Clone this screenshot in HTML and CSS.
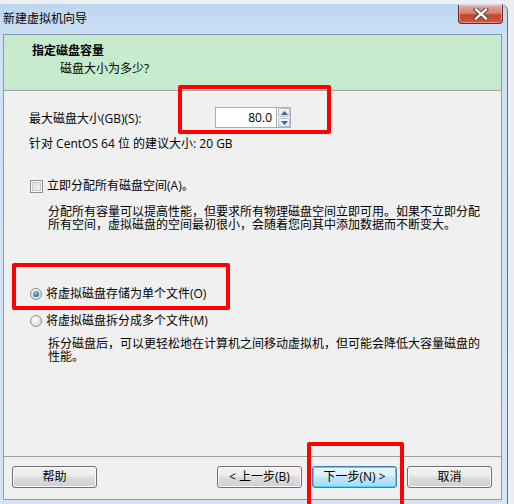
FILE: index.html
```html
<!DOCTYPE html>
<html lang="zh-CN">
<head>
<meta charset="utf-8">
<title>新建虚拟机向导</title>
<link rel="stylesheet" href="styles.css">
</head>
<body>
<div class="screen">
  <div class="window">
    <div class="titlebar">
      <span class="title">新建虚拟机向导</span>
      <div class="close">
        <svg width="16" height="12" viewBox="0 0 16 12">
          <path d="M3 1.5 L13 10.5 M13 1.5 L3 10.5" stroke="#3a3a3a" stroke-width="4.2" stroke-linecap="square"/>
          <path d="M3 1.5 L13 10.5 M13 1.5 L3 10.5" stroke="#ffffff" stroke-width="2.4" stroke-linecap="square"/>
        </svg>
      </div>
    </div>
    <div class="client">
      <div class="header">
        <div class="h-title">指定磁盘容量</div>
        <div class="h-sub">磁盘大小为多少?</div>
      </div>
      <div class="body">
        <div class="size-row">
          <span class="size-label">最大磁盘大小(GB)(S):</span>
          <div class="spin">
            <div class="spin-input">80.0</div>
            <div class="spin-btns">
              <div class="spin-btn"><svg width="7" height="4" viewBox="0 0 7 4"><path d="M0 4 L3.5 0 L7 4 Z" fill="#4d6185"/></svg></div>
              <div class="spin-btn"><svg width="7" height="4" viewBox="0 0 7 4"><path d="M0 0 L3.5 4 L7 0 Z" fill="#4d6185"/></svg></div>
            </div>
          </div>
        </div>
        <div class="hint">针对 CentOS 64 位 的建议大小: 20 GB</div>
        <div class="check-row"><span class="checkbox"></span><span>立即分配所有磁盘空间(A)。</span></div>
        <p class="desc desc1">分配所有容量可以提高性能，但要求所有物理磁盘空间立即可用。如果不立即分配所有空间，虚拟磁盘的空间最初很小，会随着您向其中添加数据而不断变大。</p>
        <div class="radio-row r1"><span class="radio on"></span><span>将虚拟磁盘存储为单个文件(O)</span></div>
        <div class="radio-row r2"><span class="radio"></span><span>将虚拟磁盘拆分成多个文件(M)</span></div>
        <p class="desc desc2">拆分磁盘后，可以更轻松地在计算机之间移动虚拟机，但可能会降低大容量磁盘的性能。</p>
      </div>
      <div class="footer">
        <button class="btn">帮助</button>
        <div class="spacer"></div>
        <button class="btn">&lt; 上一步(B)</button>
        <button class="btn primary">下一步(N) &gt;</button>
        <button class="btn">取消</button>
      </div>
    </div>
  </div>
  <div class="mark mark1"></div>
  <div class="mark mark2"></div>
  <div class="mark mark3"></div>
</div>
</body>
</html>
```
FILE: styles.css
```css
html, body {
  margin: 0;
  padding: 0;
}
body {
  font-family: "Open Sans", "Noto Sans CJK SC", sans-serif;
  font-size: 12px;
  color: #000;
}
.screen {
  position: relative;
  width: 514px;
  height: 504px;
  overflow: hidden;
  background: #eceef1;
  padding-top: 4px;
  box-sizing: border-box;
}
.window {
  width: 508px;
  height: 506px;
  box-sizing: border-box;
  background: linear-gradient(#bfd6f0, #cfe1f5 40px, #d4e4f6);
  border-top-right-radius: 7px;
  border-right: 1px solid #5d6f85;
  padding: 0 5px 0 3px;
}
.titlebar {
  height: 30px;
  display: flex;
  align-items: flex-start;
  justify-content: space-between;
}
.title {
  margin-top: 6px;
  line-height: 18px;
  font-size: 12px;
}
.close {
  width: 45px;
  height: 19px;
  margin-top: 1px;
  margin-right: -1px;
  box-sizing: border-box;
  border: 1px solid #6b2a22;
  border-top: none;
  border-radius: 0 0 4px 4px;
  background: linear-gradient(#e7a89d, #d8806f 45%, #c4442f 55%, #d05a40);
  display: flex;
  align-items: center;
  justify-content: center;
  box-shadow: inset 0 0 0 1px rgba(255,255,255,0.35);
}
.client {
  height: 466px;
  box-sizing: border-box;
  border: 1px solid #8899ad;
  background: #f0f0f0;
  display: flex;
  flex-direction: column;
}
.header {
  height: 56px;
  box-sizing: border-box;
  background: #c6ebcd;
  border-bottom: 1px solid #a0a0a0;
  padding-top: 8px;
}
.h-title {
  font-weight: bold;
  line-height: 16px;
  padding-left: 28px;
}
.h-sub {
  line-height: 16px;
  padding-left: 56px;
  margin-top: 2px;
}
.body {
  flex: 1;
  padding: 0 18px 0 25px;
}
.size-row {
  display: flex;
  align-items: center;
  margin-top: 16px;
  height: 21px;
}
.size-label {
  width: 186px;
}
.spin {
  display: flex;
  height: 21px;
}
.spin-input {
  width: 61px;
  box-sizing: border-box;
  border: 1px solid #abadb3;
  border-right: none;
  background: #fff;
  text-align: right;
  padding-right: 4px;
  line-height: 19px;
  font-size: 12px;
}
.spin-btns {
  width: 15px;
  display: flex;
  flex-direction: column;
  gap: 1px;
  border: 1px solid #abadb3;
  box-sizing: border-box;
  background: #fff;
  padding: 0 0 0 1px;
}
.spin-btn {
  flex: 1;
  display: flex;
  align-items: center;
  justify-content: center;
  background: linear-gradient(#f4f6fa, #dde3ec);
  border: 1px solid #b8c2d2;
  border-radius: 1px;
}
.hint {
  margin-top: 8px;
  line-height: 16px;
}
.check-row {
  margin-top: 26px;
  display: flex;
  align-items: center;
  line-height: 16px;
  gap: 4px;
}
.checkbox {
  width: 13px;
  height: 13px;
  box-sizing: border-box;
  border: 1px solid #8e8f8f;
  background: linear-gradient(135deg, #dcdcdc, #f4f4f4);
  box-shadow: inset 0 0 0 1px #f6f6f6, inset 0 0 0 2px #c9c9c9;
  margin-left: 1px;
}
.desc {
  margin: 0;
  padding-left: 19px;
  line-height: 13px;
}
.desc1 {
  margin-top: 11px;
}
.radio-row {
  display: flex;
  align-items: center;
  line-height: 16px;
  gap: 4px;
}
.r1 {
  margin-top: 55px;
}
.r2 {
  margin-top: 11px;
}
.radio {
  width: 12px;
  height: 12px;
  box-sizing: border-box;
  border-radius: 50%;
  border: 1px solid #8e8f8f;
  background: radial-gradient(circle at 40% 35%, #ffffff, #dcdcdc 70%);
  margin-left: 1px;
  position: relative;
}
.radio.on::after {
  content: "";
  position: absolute;
  left: 2px;
  top: 2px;
  width: 6px;
  height: 6px;
  border-radius: 50%;
  background: radial-gradient(circle at 40% 35%, #8ad0f5, #1d5c9c 80%);
}
.desc2 {
  margin-top: 8px;
}
.footer {
  height: 43px;
  box-sizing: border-box;
  border-top: 1px solid #a0a0a0;
  display: flex;
  align-items: flex-start;
  padding: 9px 9px 0 8px;
  gap: 10px;
}
.spacer {
  flex: 1;
}
.btn {
  width: 85px;
  height: 22px;
  box-sizing: border-box;
  border: 1px solid #707070;
  border-radius: 3px;
  background: linear-gradient(#f2f2f2, #ebebeb 45%, #dddddd 50%, #cfcfcf);
  box-shadow: inset 0 0 0 1px #fbfbfb;
  font-family: "Open Sans", "Noto Sans CJK SC", sans-serif;
  font-size: 12px;
  line-height: 18px;
  padding: 0;
  color: #000;
}
.btn.primary {
  border-color: #3c7fb1;
  background: linear-gradient(#eaf6fd, #d9f0fc 45%, #bee6fd 50%, #a7d9f5);
  box-shadow: inset 0 0 0 1px #48d7fb;
}
.mark {
  position: absolute;
  border: 4px solid #ff0000;
  border-radius: 2px;
  box-sizing: border-box;
}
.mark1 {
  left: 178px;
  top: 85px;
  width: 153px;
  height: 49px;
}
.mark2 {
  left: 12px;
  top: 263px;
  width: 218px;
  height: 47px;
}
.mark3 {
  left: 307px;
  top: 442px;
  width: 97px;
  height: 70px;
}
```
